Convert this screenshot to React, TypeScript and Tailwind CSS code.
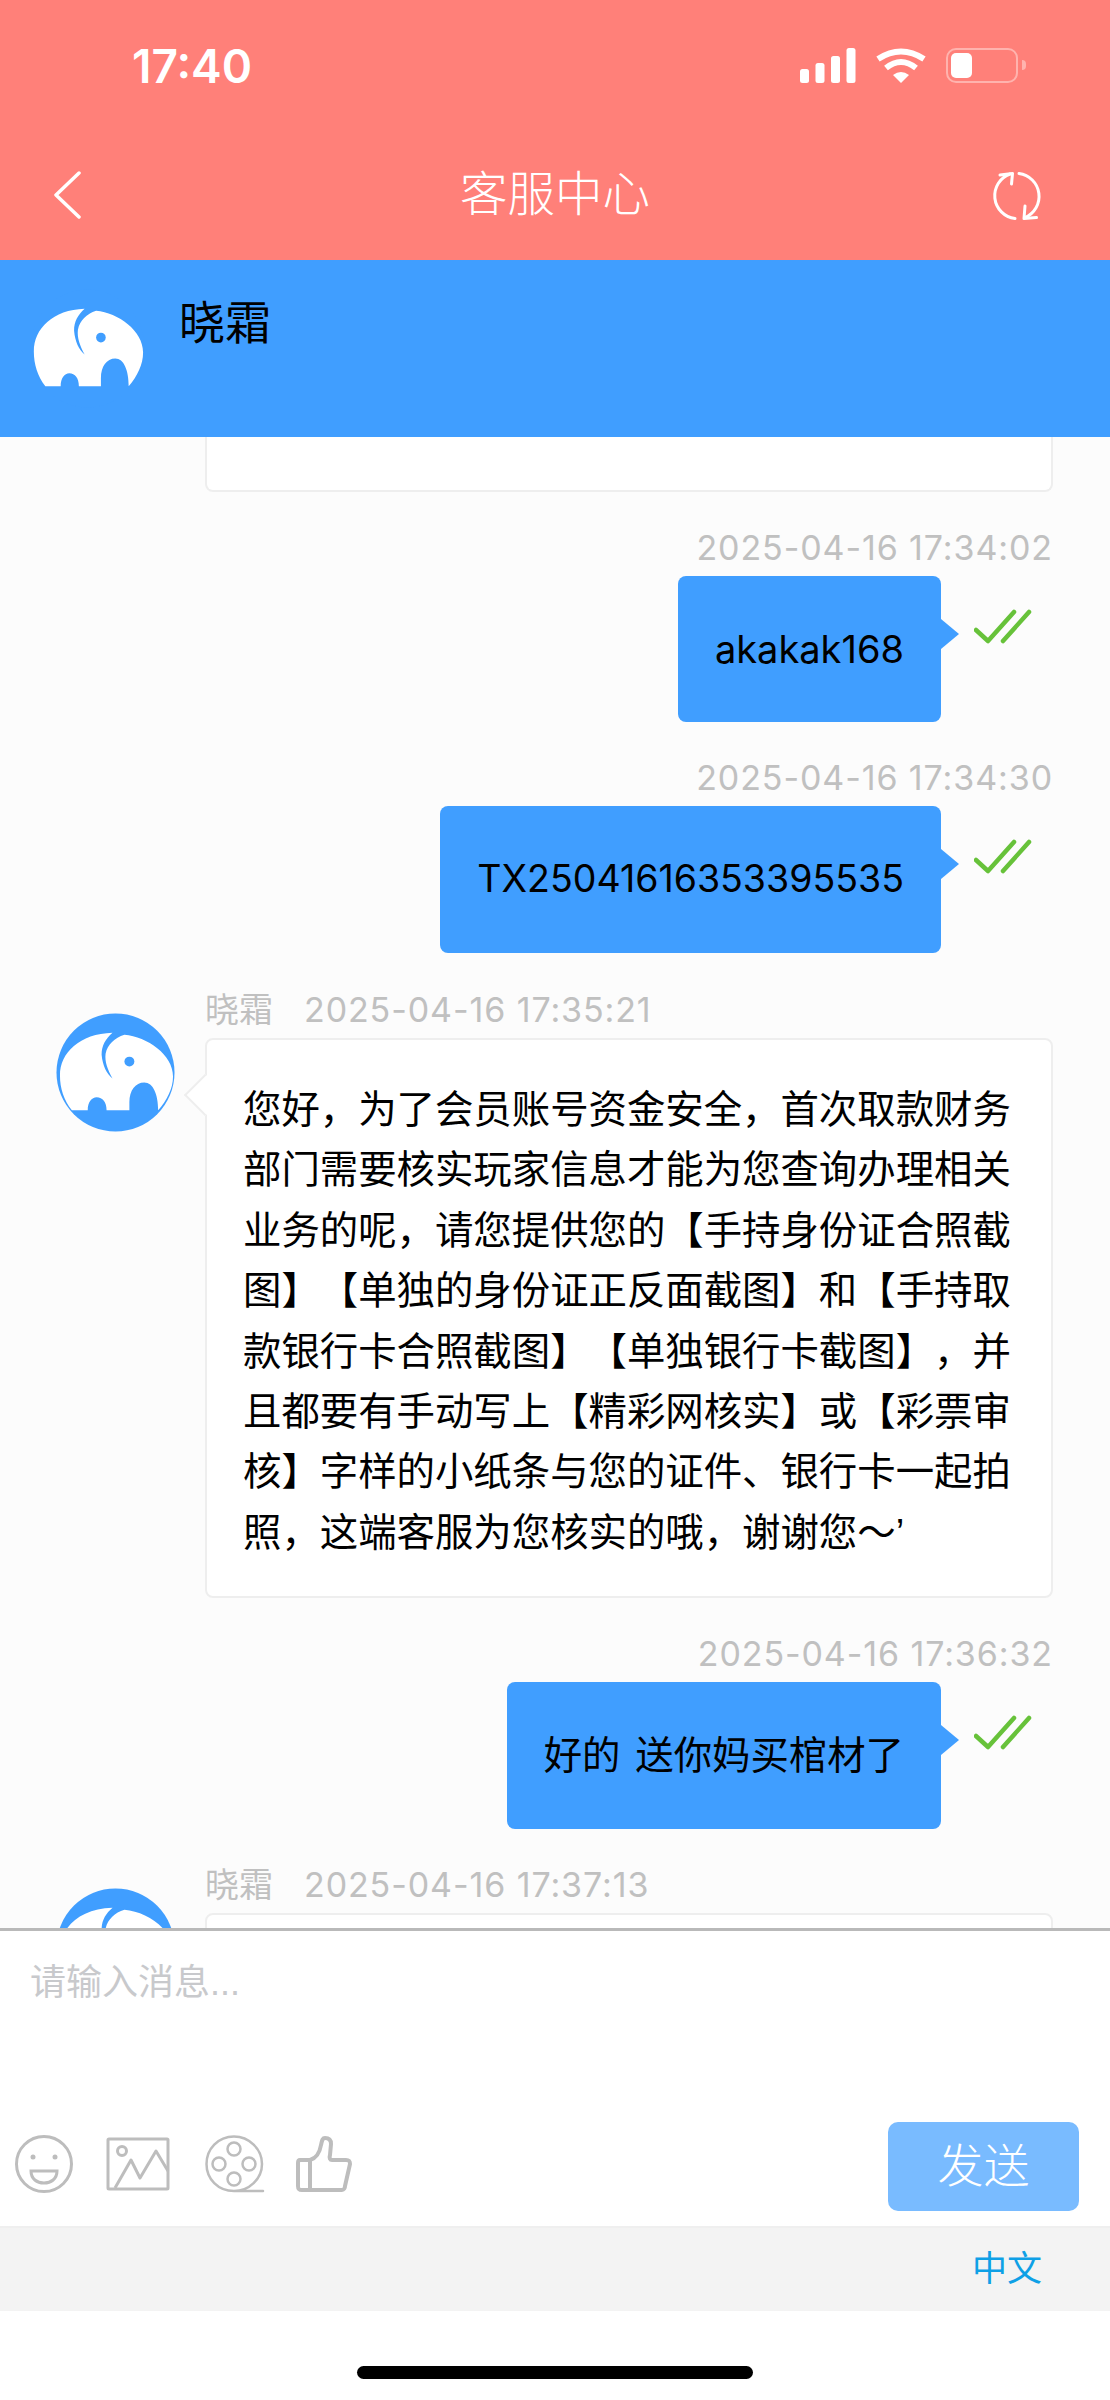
const font = { fontFamily: '"Liberation Sans", "Noto Sans CJK SC", sans-serif' };
const latin = { fontFamily: 'Inter, "Noto Sans CJK SC", sans-serif' };

function Elephant({ className }: { className?: string }) {
  return (
    <svg viewBox="0 0 120 120" preserveAspectRatio="none" className={className}>
      <circle cx="60" cy="60" r="59.5" fill="#409eff" />
      <path
        d="M16 98 C8 88 4 76 4 63 C4 40 24 21 57 20 C50 26 46 33 46 42 C47 53 51 61 57 66 C52 57 49 49 50 41 C52 32 59 25 69 22 C92 24 118 42 118 64 C118 76 112 88 103 98 C103 82 98 70 89 70 C80 70 74 78 74 90 L74 98 L51 98 C51 90 47 85 41 85 C36 85 32 90 32 98 Z"
        fill="#fff"
      />
      <circle cx="74" cy="49" r="5" fill="#409eff" />
    </svg>
  );
}

function Check() {
  return (
    <svg viewBox="0 0 60 40" className="w-[60px] h-[40px] ml-[33px] mt-[33px] shrink-0" fill="none" stroke="#67c23a" strokeWidth="4.5" strokeLinecap="round" strokeLinejoin="round">
      <path d="M2 21 L14 32 L40 3" />
      <path d="M29 32 L55 3" />
    </svg>
  );
}

function Sent({ time, text, height, top, textClass }: { time: string; text: string; height: string; top: string; textClass: string }) {
  return (
    <div className={top}>
      <div className="h-10 leading-10 text-right mr-[57px] text-[34px] tracking-[0.9px] text-[#c0c0c0]" style={latin}>{time}</div>
      <div className="flex justify-end mt-2 mr-[76px]">
        <div className={`relative ${height} flex items-center px-[37px] bg-[#409eff] rounded-lg text-black ${textClass}`} style={latin}>
          {text}
          <div className="absolute left-full top-[43px] w-0 h-0 border-y-[15px] border-y-transparent border-l-[18px] border-l-[#409eff]" />
        </div>
        <Check />
      </div>
    </div>
  );
}

function Received({ time, top, children, clipped }: { time: string; top: string; children?: React.ReactNode; clipped?: boolean }) {
  return (
    <div className={`flex pl-[56px] ${top}`}>
      <Elephant className="w-[119px] h-[119px] mt-[23px] shrink-0" />
      <div className="ml-[30px] w-[848px]">
        <div className="h-10 leading-10 flex text-[34px] text-[#c0c0c0]" style={latin}>
          <span>晓霜</span>
          <span className="ml-[31px] tracking-[0.9px]">{time}</span>
        </div>
        <div className={`relative mt-2 bg-white border-2 border-[#eeeeee] rounded-lg ${clipped ? "h-[100px]" : "px-[36px] pt-[40px] pb-[33px]"} text-[38.4px] leading-[60.4px] text-black [text-spacing-trim:space-all]`}>
          {children}
          <div className="absolute -left-[17px] top-[40px] w-[30px] h-[30px] rotate-45 bg-white border-l-2 border-b-2 border-[#eeeeee]" />
        </div>
      </div>
    </div>
  );
}

export default function App() {
  return (
    <div className="h-[2400px] w-[1110px] flex flex-col bg-white overflow-hidden" style={font}>
      {/* status bar + nav */}
      <div className="h-[260px] bg-[#ff8079] shrink-0 text-white">
        <div className="h-[132px] flex items-start justify-between pl-[132px] pr-[84px] pt-[38px]">
          <span className="text-[46px] leading-[56px] font-semibold" style={{ fontFamily: "Inter, sans-serif" }}>17:40</span>
          <div className="flex items-center gap-[20px] mt-[9px]">
            <svg viewBox="0 0 56 36" className="w-[56px] h-[36px]" fill="#fff">
              <rect x="0" y="22" width="9" height="14" rx="2.5" />
              <rect x="15.5" y="16" width="9" height="20" rx="2.5" />
              <rect x="31" y="9" width="9" height="27" rx="2.5" />
              <rect x="46.5" y="1" width="9" height="35" rx="2.5" />
            </svg>
            <svg viewBox="0 0 50 36" className="w-[50px] h-[36px]" fill="none" stroke="#fff" strokeWidth="6">
              <path d="M2 12 Q25 -3 48 12" />
              <path d="M10 21 Q25 9 40 21" />
              <path d="M25 36 L17 28 Q25 22 33 28 Z" fill="#fff" stroke="none" />
            </svg>
            <div className="flex items-center">
              <div className="w-[72px] h-[35px] rounded-[10px] border-[2px] border-[#ffb3ae] p-[3px]">
                <div className="w-[21px] h-full bg-white rounded-[5px]" />
              </div>
              <div className="w-[4px] h-[10px] ml-[4px] bg-[#ffb3ae] rounded-r-full" />
            </div>
          </div>
        </div>
        <div className="h-[128px] flex items-center justify-between pl-[52px] pr-[62px]">
          <div className="w-[70px]">
            <svg viewBox="0 0 30 48" className="w-[30px] h-[48px] -mt-[2px]" fill="none" stroke="#fff" strokeWidth="3.5" strokeLinecap="round" strokeLinejoin="round">
              <path d="M27 2 L4 24 L27 46" />
            </svg>
          </div>
          <span className="text-[47.5px] leading-none font-light -mt-[3px]">客服中心</span>
          <svg viewBox="18 10 60 60" className="w-[60px] h-[60px]" fill="none" stroke="#fff" strokeWidth="3" strokeLinecap="round" strokeLinejoin="round">
            <path d="M45 62.5 A23 23 0 0 1 40 18" />
            <path d="M30 19 L42.5 17.5 L41.5 28" />
            <path d="M49 17.5 A23 23 0 0 1 55 61.5" />
            <path d="M55 50 L54 62.5 L66.5 61.5" />
          </svg>
        </div>
      </div>

      {/* agent header */}
      <div className="h-[177px] bg-[#409eff] shrink-0 flex items-start pl-[30px]">
        <Elephant className="w-[115px] h-[119px] mt-[29px] shrink-0" />
        <span className="ml-[34px] mt-[34px] text-[46px] leading-[58px] text-black">晓霜</span>
      </div>

      {/* messages */}
      <div className="flex-1 min-h-0 overflow-hidden bg-[#fcfcfc]">
        <div className="h-[55px] ml-[205px] mr-[57px] bg-white border-x-2 border-b-2 border-[#eeeeee] rounded-b-lg" />
        <Sent time="2025-04-16 17:34:02" text="akakak168" height="h-[146px]" top="mt-[36px]" textClass="text-[38px]" />
        <Sent time="2025-04-16 17:34:30" text="TX25041616353395535" height="h-[147px]" top="mt-[36px]" textClass="text-[37.5px]" />
        <Received time="2025-04-16 17:35:21" top="mt-[37px]">
          您好，为了会员账号资金安全，首次取款财务部门需要核实玩家信息才能为您查询办理相关业务的呢，请您提供您的【手持身份证合照截图】【单独的身份证正反面截图】和【手持取款银行卡合照截图】【单独银行卡截图】，并且都要有手动写上【精彩网核实】或【彩票审核】字样的小纸条与您的证件、银行卡一起拍照，这端客服为您核实的哦，谢谢您～’
        </Received>
        <Sent time="2025-04-16 17:36:32" text="好的 送你妈买棺材了" height="h-[147px]" top="mt-[36px]" textClass="text-[38.4px] [word-spacing:4px]" />
        <Received time="2025-04-16 17:37:13" top="mt-[36px]" clipped />
      </div>

      {/* input */}
      <div className="h-[383px] shrink-0 border-t-[3px] border-[#b9b9b9] bg-white">
        <div className="pl-[30px] pt-[30px] text-[36px] leading-[44px] text-[#c8c9cc]">请输入消息...</div>
        <div className="flex items-start justify-between pl-[15px] pr-[31px] mt-[117px]">
          <div className="flex items-center gap-[33px] mt-[13px] text-[#bdbdbd]">
            <svg viewBox="0 0 58 58" className="w-[58px] h-[58px]" fill="none" stroke="currentColor" strokeWidth="3">
              <circle cx="29" cy="29" r="27.5" />
              <circle cx="18" cy="22" r="2.5" fill="currentColor" stroke="none" />
              <circle cx="40" cy="22" r="2.5" fill="currentColor" stroke="none" />
              <path d="M16 36 L42 36 C42 44 36 48 29 48 C22 48 16 44 16 36 Z" />
            </svg>
            <svg viewBox="0 0 64 54" className="w-[64px] h-[54px]" fill="none" stroke="currentColor" strokeWidth="3" strokeLinejoin="round">
              <rect x="2" y="2" width="60" height="50" rx="1" />
              <circle cx="16" cy="14" r="4.5" />
              <path d="M9 51 L25 23 L34 41 L50 14 L62 34" />
            </svg>
            <svg viewBox="0 0 60 58" className="w-[60px] h-[58px] ml-[2px]" fill="none" stroke="currentColor" strokeWidth="2.5" strokeLinecap="round">
              <path d="M29 56 C13 56 1.5 44 1.5 29 C1.5 14 13 1.5 29 1.5 C44 1.5 57 14 57 29 C57 44 44 56 29 56 L58 56" />
              <circle cx="29" cy="14" r="6.5" />
              <circle cx="14" cy="29" r="6.5" />
              <circle cx="44" cy="29" r="6.5" />
              <circle cx="29" cy="44" r="6.5" />
            </svg>
            <svg viewBox="0 0 56 56" className="w-[56px] h-[56px] -ml-[2px]" fill="none" stroke="currentColor" strokeWidth="4" strokeLinejoin="round">
              <path d="M14 24 L4 24 C3 24 2 25 2 27 L2 50 C2 53 3 54 6 54 L46 54 C48 54 49 52 49 50 L54 28 C54 25 53 24 50 24 L36 24 C34 24 33 22 34 19 L35 8 C35 3 32 2 29 2 C26 2 26 5 25 9 C24 15 21 22 14 24 Z" />
              <path d="M14 24 L14 54" />
            </svg>
          </div>
          <div className="w-[191px] h-[89px] rounded-[10px] bg-[#79bbff] text-white text-[46px] font-light flex items-center justify-center">发送</div>
        </div>
        <div className="h-[85px] mt-[15px] bg-[#f3f3f3] border-t-2 border-[#efefef] flex items-center justify-end pr-[68px] text-[35px] text-[#0ea0e6]">中文</div>
      </div>

      {/* home indicator */}
      <div className="h-[89px] shrink-0 bg-white flex justify-center pt-[55px]">
        <div className="w-[396px] h-[13px] bg-black rounded-full" />
      </div>
    </div>
  );
}
